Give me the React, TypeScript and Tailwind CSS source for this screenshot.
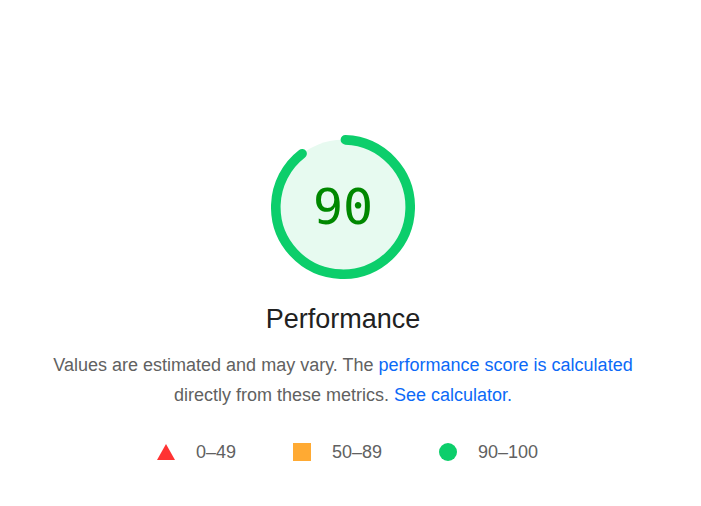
import type { ReactNode } from 'react'

const R = 56
const STROKE = 8
const CIRC = 2 * Math.PI * R

function Gauge({ score }: { score: number }) {
  const pct = score / 100
  const arc = pct === 1 ? CIRC : pct * CIRC - STROKE / 2
  const rotate = -90 + ((0.25 * STROKE) / CIRC) * 360

  return (
    <div className="relative h-[144px] w-[144px]">
      <svg viewBox="0 0 120 120" className="h-full w-full">
        <circle cx="60" cy="60" r={R} fill="#e7faf0" stroke="none" />
        <circle
          cx="60"
          cy="60"
          r={R}
          fill="none"
          stroke="#0cce6b"
          strokeWidth={STROKE}
          strokeLinecap="round"
          strokeDasharray={`${Math.max(arc, 0)} ${CIRC}`}
          transform={`rotate(${rotate} 60 60)`}
        />
      </svg>
      <div className="absolute inset-0 flex items-center justify-center font-['DejaVu_Sans_Mono',monospace] text-[50px] leading-none text-[#008800]">
        {score}
      </div>
    </div>
  )
}

function LegendItem({ icon, label }: { icon: ReactNode; label: string }) {
  return (
    <div className="flex items-center gap-[21px]">
      {icon}
      <span>{label}</span>
    </div>
  )
}

export default function App() {
  return (
    <div className="h-[506px] w-full bg-white font-['Liberation_Sans',Arial,sans-serif]">
      <div className="flex w-[686px] flex-col items-center pt-[135px]">
        <Gauge score={90} />

        <h2 className="mt-[22px] text-[27px] leading-[36px] text-[#212121]">Performance</h2>

        <p className="mt-[13px] w-[600px] text-center text-[18px] leading-[30px] text-[#616161]">
          Values are estimated and may vary. The{' '}
          <a href="#" className="text-[#0b69f7]">
            performance score is calculated
          </a>{' '}
          directly from these metrics.{' '}
          <a href="#" className="text-[#0b69f7]">
            See calculator.
          </a>
        </p>

        {/* score ranges */}
        <div className="mt-[30px] flex items-center gap-[57px] pl-[9px] text-[18px] leading-[24px] text-[#616161]">
          <LegendItem
            label="0–49"
            icon={
              <svg width="18" height="18" viewBox="0 0 18 18">
                <polygon points="9,1 18,17 0,17" fill="#ff3333" />
              </svg>
            }
          />
          <LegendItem label="50–89" icon={<span className="block h-[18px] w-[18px] bg-[#ffaa33]" />} />
          <LegendItem
            label="90–100"
            icon={<span className="block h-[18px] w-[18px] rounded-full bg-[#0cce6b]" />}
          />
        </div>
      </div>
    </div>
  )
}
